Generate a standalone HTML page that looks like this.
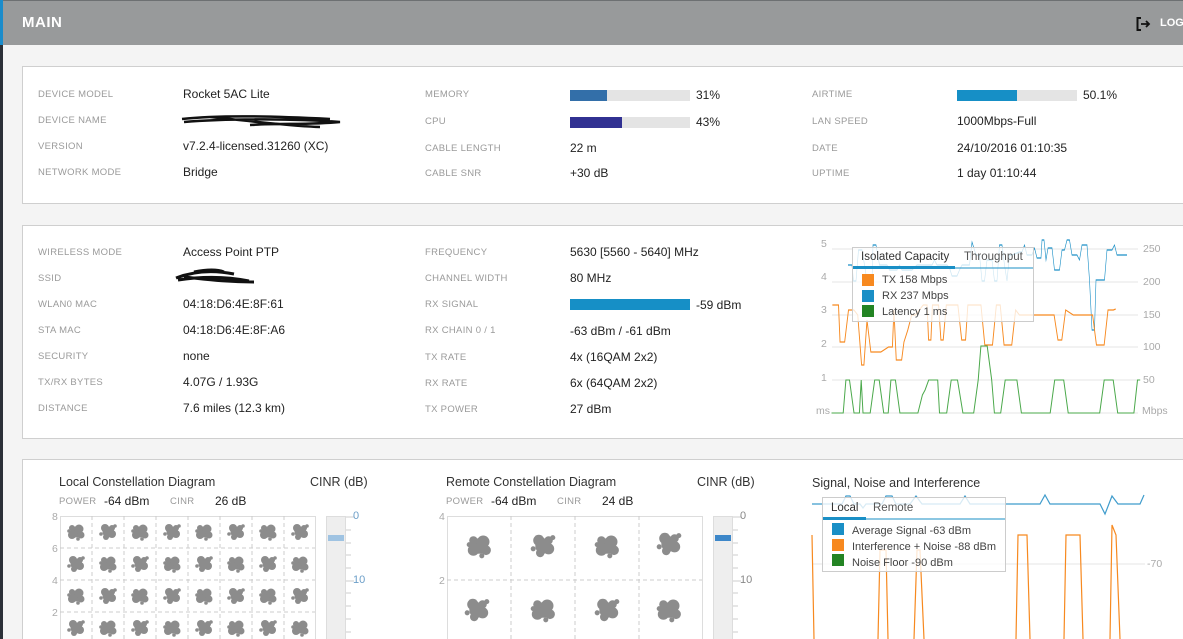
<!DOCTYPE html>
<html><head><meta charset="utf-8">
<style>
*{margin:0;padding:0;box-sizing:border-box}
html,body{overflow:hidden}
body{width:1183px;height:639px;background:#f4f4f4;font-family:"Liberation Sans",sans-serif;position:relative}
.abs{position:absolute;white-space:nowrap}
#hdr{position:absolute;left:0;top:0;width:1183px;height:45px;background:#989a9b;border-top:1px solid #6d7072}
#strip{position:absolute;left:0;top:0;width:3px;height:639px;background:#2b3038}
#strip2{position:absolute;left:0;top:0;width:3px;height:45px;background:#1b8ccb}
.card{position:absolute;left:22px;width:1170px;background:#fff;border:1px solid #cfcfcf}
.l{position:absolute;font-size:9.5px;color:#9a9a9a;white-space:nowrap;letter-spacing:.3px}
.v{position:absolute;font-size:12px;color:#222;white-space:nowrap}
.bar{position:absolute;height:11px;background:#e4e4e4}
.bar i{display:block;height:11px}
.t{position:absolute;font-size:12px;color:#333;white-space:nowrap}
.ax{position:absolute;font-size:10.5px;color:#aaa;white-space:nowrap}
</style></head><body>
<div id="hdr"></div>
<div id="strip"></div><div id="strip2"></div>
<div class="abs" style="left:22px;top:14px;font-size:15px;font-weight:bold;color:#fff;letter-spacing:.5px">MAIN</div>
<svg class="abs" style="left:1136px;top:17px" width="16" height="14" viewBox="0 0 16 14"><path d="M5 1H1.5V13H5" fill="none" stroke="#111" stroke-width="2"/><path d="M5 7H13M10 4L13 7L10 10" fill="none" stroke="#111" stroke-width="1.8"/></svg>
<div class="abs" style="left:1160px;top:17px;font-size:11px;font-weight:bold;color:#fff">LOG</div>

<div class="card" style="top:66px;height:138px"></div>
<div class="l" style="left:38px;top:89px">DEVICE MODEL</div><div class="v" style="left:183px;top:87px">Rocket 5AC Lite</div>
<div class="l" style="left:38px;top:115px">DEVICE NAME</div>
<svg class="abs" style="left:180px;top:113px" width="165" height="22"><path d="M2 6C40 2 90 3 150 6M4 9C50 5 120 6 160 9C130 12 100 10 70 12M30 4C70 8 110 13 140 14" fill="none" stroke="#111" stroke-width="2.5"/></svg>
<div class="l" style="left:38px;top:141px">VERSION</div><div class="v" style="left:183px;top:139px">v7.2.4-licensed.31260 (XC)</div>
<div class="l" style="left:38px;top:167px">NETWORK MODE</div><div class="v" style="left:183px;top:165px">Bridge</div>

<div class="l" style="left:425px;top:89px">MEMORY</div><div class="bar" style="left:570px;top:90px;width:120px"><i style="width:37px;background:#336fa9"></i></div><div class="v" style="left:696px;top:88px">31%</div>
<div class="l" style="left:425px;top:116px">CPU</div><div class="bar" style="left:570px;top:117px;width:120px"><i style="width:52px;background:#313192"></i></div><div class="v" style="left:696px;top:115px">43%</div>
<div class="l" style="left:425px;top:143px">CABLE LENGTH</div><div class="v" style="left:570px;top:141px">22 m</div>
<div class="l" style="left:425px;top:168px">CABLE SNR</div><div class="v" style="left:570px;top:166px">+30 dB</div>

<div class="l" style="left:812px;top:89px">AIRTIME</div><div class="bar" style="left:957px;top:90px;width:120px"><i style="width:60px;background:#168fc6"></i></div><div class="v" style="left:1083px;top:88px">50.1%</div>
<div class="l" style="left:812px;top:116px">LAN SPEED</div><div class="v" style="left:957px;top:114px">1000Mbps-Full</div>
<div class="l" style="left:812px;top:143px">DATE</div><div class="v" style="left:957px;top:141px">24/10/2016 01:10:35</div>
<div class="l" style="left:812px;top:168px">UPTIME</div><div class="v" style="left:957px;top:166px">1 day 01:10:44</div>

<div class="card" style="top:225px;height:214px"></div>
<div class="l" style="left:38px;top:247px">WIRELESS MODE</div><div class="v" style="left:183px;top:245px">Access Point PTP</div>
<div class="l" style="left:38px;top:273px">SSID</div>
<svg class="abs" style="left:174px;top:266px" width="85" height="22"><path d="M2 12C20 5 40 4 60 8M4 14C30 10 55 11 75 15M20 6C35 3 45 4 50 6M10 11C30 13 50 16 80 16" fill="none" stroke="#111" stroke-width="3"/></svg>
<div class="l" style="left:38px;top:299px">WLAN0 MAC</div><div class="v" style="left:183px;top:297px">04:18:D6:4E:8F:61</div>
<div class="l" style="left:38px;top:325px">STA MAC</div><div class="v" style="left:183px;top:323px">04:18:D6:4E:8F:A6</div>
<div class="l" style="left:38px;top:351px">SECURITY</div><div class="v" style="left:183px;top:349px">none</div>
<div class="l" style="left:38px;top:377px">TX/RX BYTES</div><div class="v" style="left:183px;top:375px">4.07G / 1.93G</div>
<div class="l" style="left:38px;top:403px">DISTANCE</div><div class="v" style="left:183px;top:401px">7.6 miles (12.3 km)</div>

<div class="l" style="left:425px;top:247px">FREQUENCY</div><div class="v" style="left:570px;top:245px">5630 [5560 - 5640] MHz</div>
<div class="l" style="left:425px;top:273px">CHANNEL WIDTH</div><div class="v" style="left:570px;top:271px">80 MHz</div>
<div class="l" style="left:425px;top:299px">RX SIGNAL</div><div class="bar" style="left:570px;top:299px;width:120px"><i style="width:120px;background:#168fc6"></i></div><div class="v" style="left:696px;top:298px">-59 dBm</div>
<div class="l" style="left:425px;top:325px">RX CHAIN 0 / 1</div><div class="v" style="left:570px;top:324px">-63 dBm / -61 dBm</div>
<div class="l" style="left:425px;top:352px">TX RATE</div><div class="v" style="left:570px;top:350px">4x (16QAM 2x2)</div>
<div class="l" style="left:425px;top:378px">RX RATE</div><div class="v" style="left:570px;top:376px">6x (64QAM 2x2)</div>
<div class="l" style="left:425px;top:404px">TX POWER</div><div class="v" style="left:570px;top:402px">27 dBm</div>

<!-- chart 1 -->
<svg class="abs" style="left:800px;top:230px" width="383" height="200">
<g stroke="#e6e6e6" stroke-width="1"><line x1="32" y1="19" x2="338" y2="19"/><line x1="32" y1="52" x2="338" y2="52"/><line x1="32" y1="85" x2="338" y2="85"/><line x1="32" y1="117" x2="338" y2="117"/><line x1="32" y1="150" x2="338" y2="150"/><line x1="32" y1="183" x2="338" y2="183"/></g>
<polyline fill="none" stroke="#1a8fc6" stroke-width="1.2" points="32,35 40,35 43,51 48,51 53,20 60,20 65,35 70,51 80,51 82,15 88,15 95,35 110,35 115,40 130,40 135,35 140,40 160,40 170,35 180,35 200,35 205,30 210,35 230,35 235,38 240,46 250,46 255,40 260,35 275,35 280,12 288,25 295,25 300,51 305,51 310,30 320,30 325,51 330,51 335,15 340,15 345,35 350,51 355,25 360,25 375,22 380,22 385,15 390,25 400,25 405,18 410,28 418,28 420,10 424,10 428,30 432,18 440,18 445,40 455,40 460,20 465,20 470,10 475,10 480,25 490,25 495,30 500,15 510,15 515,50 520,100 525,100 528,50 540,50 545,50 550,20 560,20 565,15 570,25 590,25" transform="scale(0.5,1) translate(64,0)"/>
<polyline fill="none" stroke="#f7891f" stroke-width="1.2" points="32,75 40,75 42,112 48,112 53,80 60,80 65,85 70,135 73,135 77,90 82,122 95,122 105,117 110,117 112,80 115,130 122,130 125,112 130,100 135,85 140,85 150,75 155,75 157,110 160,110 162,75 170,75 173,110 176,110 180,75 195,75 200,110 205,110 208,75 225,75 230,115 240,115 245,75 250,75 255,115 265,115 270,80 275,85 320,85 325,110 330,110 335,80 345,85 370,85 375,115 385,115 390,80 397,80 400,79" transform="scale(0.77,1) translate(10,0)"/>
<polyline fill="none" stroke="#4aa84a" stroke-width="1.1" points="32,183 45,183 48,150 52,150 57,183 63,183 65,150 67,183 75,183 80,150 85,150 90,183 95,183 98,150 103,150 108,183 128,183 133,165 136,160 140,150 150,150 152,183 160,183 165,150 172,150 178,183 190,183 195,150 198,116 205,116 210,150 213,183 220,183 225,150 238,150 243,183 275,183 280,150 290,150 295,183 330,183 335,150 345,150 350,183 368,183 372,150 375,150" transform="scale(0.9,1) translate(3,0)"/>
<rect x="52.5" y="17.5" width="181" height="74" fill="#fff" fill-opacity="0.78" stroke="#ccc"/>
<line x1="53" y1="38" x2="233" y2="38" stroke="#1a8fc6" stroke-width="1"/>
<rect x="53" y="36" width="102" height="3" fill="#1a8fc6"/>
<rect x="62" y="44" width="12" height="12" fill="#f7891f"/><rect x="62" y="60" width="12" height="12" fill="#1a8fc6"/><rect x="62" y="75" width="12" height="12" fill="#238423"/>
</svg>
<div class="t" style="left:861px;top:251px;font-size:11.5px">Isolated Capacity</div>
<div class="t" style="left:964px;top:251px;font-size:11.5px;color:#555">Throughput</div>
<div class="t" style="left:882px;top:274px;font-size:11px;color:#444">TX 158 Mbps</div>
<div class="t" style="left:882px;top:290px;font-size:11px;color:#444">RX 237 Mbps</div>
<div class="t" style="left:882px;top:306px;font-size:11px;color:#444">Latency 1 ms</div>
<div class="ax" style="left:821px;top:238px">5</div><div class="ax" style="left:821px;top:271px">4</div><div class="ax" style="left:821px;top:304px">3</div><div class="ax" style="left:821px;top:338px">2</div><div class="ax" style="left:821px;top:372px">1</div><div class="ax" style="left:816px;top:405px">ms</div>
<div class="ax" style="left:1143px;top:243px">250</div><div class="ax" style="left:1143px;top:276px">200</div><div class="ax" style="left:1143px;top:309px">150</div><div class="ax" style="left:1143px;top:341px">100</div><div class="ax" style="left:1143px;top:374px">50</div><div class="ax" style="left:1142px;top:405px">Mbps</div>

<div class="card" style="top:459px;height:190px"></div>
<svg width="0" height="0" style="position:absolute"><defs>
<g id="b1" fill="#8c8c8c"><circle cx="0" cy="0" r="5.5"/><circle cx="3" cy="-3" r="4.5"/><circle cx="-4" cy="3" r="4"/><circle cx="5" cy="3" r="3.5"/><circle cx="-4" cy="-4" r="3"/><circle cx="-7" cy="-1" r="1.8"/><circle cx="2" cy="7" r="1.8"/></g>
<g id="b2" fill="#8c8c8c"><circle cx="0" cy="0" r="5.5"/><circle cx="-3" cy="-4" r="4"/><circle cx="4" cy="2" r="4"/><circle cx="-2" cy="5" r="3"/><circle cx="4" cy="-4" r="3"/><circle cx="7" cy="-6" r="1.8"/><circle cx="-7" cy="2" r="1.8"/></g>
</defs></svg>
<div class="t" style="left:59px;top:475px;font-size:12.5px">Local Constellation Diagram</div>
<div class="t" style="left:310px;top:475px;font-size:12.5px">CINR (dB)</div>
<div class="l" style="left:59px;top:496px">POWER</div><div class="v" style="left:104px;top:494px">-64 dBm</div>
<div class="l" style="left:170px;top:496px">CINR</div><div class="v" style="left:215px;top:494px">26 dB</div>
<div class="ax" style="left:52px;top:511px">8</div><div class="ax" style="left:52px;top:543px">6</div><div class="ax" style="left:52px;top:575px">4</div><div class="ax" style="left:52px;top:607px">2</div>
<svg class="abs" style="left:60px;top:516px" width="300" height="123">
<rect x="0.5" y="0.5" width="255" height="130" fill="none" stroke="#ddd"/>
<g stroke="#ccc" stroke-dasharray="4,3"><line x1="32" y1="0" x2="32" y2="123"/><line x1="64" y1="0" x2="64" y2="123"/><line x1="96" y1="0" x2="96" y2="123"/><line x1="128" y1="0" x2="128" y2="123"/><line x1="160" y1="0" x2="160" y2="123"/><line x1="192" y1="0" x2="192" y2="123"/><line x1="224" y1="0" x2="224" y2="123"/><line x1="0" y1="32" x2="255" y2="32"/><line x1="0" y1="64" x2="255" y2="64"/><line x1="0" y1="96" x2="255" y2="96"/></g>
<g>
<use href="#b1" x="16" y="16"/><use href="#b2" x="48" y="16"/><use href="#b1" x="80" y="16"/><use href="#b2" x="112" y="16"/><use href="#b1" x="144" y="16"/><use href="#b2" x="176" y="16"/><use href="#b1" x="208" y="16"/><use href="#b2" x="240" y="16"/>
<use href="#b2" x="16" y="48"/><use href="#b1" x="48" y="48"/><use href="#b2" x="80" y="48"/><use href="#b1" x="112" y="48"/><use href="#b2" x="144" y="48"/><use href="#b1" x="176" y="48"/><use href="#b2" x="208" y="48"/><use href="#b1" x="240" y="48"/>
<use href="#b1" x="16" y="80"/><use href="#b2" x="48" y="80"/><use href="#b1" x="80" y="80"/><use href="#b2" x="112" y="80"/><use href="#b1" x="144" y="80"/><use href="#b2" x="176" y="80"/><use href="#b1" x="208" y="80"/><use href="#b2" x="240" y="80"/>
<use href="#b2" x="16" y="112"/><use href="#b1" x="48" y="112"/><use href="#b2" x="80" y="112"/><use href="#b1" x="112" y="112"/><use href="#b2" x="144" y="112"/><use href="#b1" x="176" y="112"/><use href="#b2" x="208" y="112"/><use href="#b1" x="240" y="112"/>
</g>
<rect x="266.5" y="0.5" width="19" height="130" fill="#eee" stroke="#ddd"/>
<rect x="268" y="19" width="16" height="6" fill="#9fc3e2"/>
<g stroke="#ccc"><line x1="286" y1="1" x2="294" y2="1"/><line x1="286" y1="14" x2="291" y2="14"/><line x1="286" y1="27" x2="291" y2="27"/><line x1="286" y1="39" x2="291" y2="39"/><line x1="286" y1="52" x2="291" y2="52"/><line x1="286" y1="65" x2="294" y2="65"/><line x1="286" y1="77" x2="291" y2="77"/><line x1="286" y1="90" x2="291" y2="90"/><line x1="286" y1="103" x2="291" y2="103"/><line x1="286" y1="116" x2="291" y2="116"/></g>
</svg>
<div class="ax" style="left:353px;top:510px;color:#6b9ec8;font-size:11px">0</div><div class="ax" style="left:353px;top:574px;color:#6b9ec8;font-size:11px">10</div>

<div class="t" style="left:446px;top:475px;font-size:12.5px">Remote Constellation Diagram</div>
<div class="t" style="left:697px;top:475px;font-size:12.5px">CINR (dB)</div>
<div class="l" style="left:446px;top:496px">POWER</div><div class="v" style="left:491px;top:494px">-64 dBm</div>
<div class="l" style="left:557px;top:496px">CINR</div><div class="v" style="left:602px;top:494px">24 dB</div>
<div class="ax" style="left:439px;top:511px">4</div><div class="ax" style="left:439px;top:575px">2</div>
<svg class="abs" style="left:447px;top:516px" width="300" height="123">
<rect x="0.5" y="0.5" width="255" height="130" fill="none" stroke="#ddd"/>
<g stroke="#ccc" stroke-dasharray="4,3"><line x1="64" y1="0" x2="64" y2="123"/><line x1="128" y1="0" x2="128" y2="123"/><line x1="192" y1="0" x2="192" y2="123"/><line x1="0" y1="64" x2="255" y2="64"/></g>
<g transform="translate(32,30) scale(1.4)"><use href="#b1"/></g><g transform="translate(96,30) scale(1.4)"><use href="#b2"/></g><g transform="translate(160,30) scale(1.4)"><use href="#b1"/></g><g transform="translate(222,28) scale(1.4)"><use href="#b2"/></g>
<g transform="translate(30,94) scale(1.4)"><use href="#b2"/></g><g transform="translate(96,94) scale(1.4)"><use href="#b1"/></g><g transform="translate(160,94) scale(1.4)"><use href="#b2"/></g><g transform="translate(222,94) scale(1.4)"><use href="#b1"/></g>
<rect x="266.5" y="0.5" width="19" height="130" fill="#eee" stroke="#ddd"/>
<rect x="268" y="19" width="16" height="6" fill="#3d87c9"/>
<g stroke="#ccc"><line x1="286" y1="1" x2="294" y2="1"/><line x1="286" y1="14" x2="291" y2="14"/><line x1="286" y1="27" x2="291" y2="27"/><line x1="286" y1="39" x2="291" y2="39"/><line x1="286" y1="52" x2="291" y2="52"/><line x1="286" y1="65" x2="294" y2="65"/><line x1="286" y1="77" x2="291" y2="77"/><line x1="286" y1="90" x2="291" y2="90"/><line x1="286" y1="103" x2="291" y2="103"/><line x1="286" y1="116" x2="291" y2="116"/></g>
</svg>
<div class="ax" style="left:740px;top:510px;color:#888;font-size:11px">0</div><div class="ax" style="left:740px;top:574px;color:#888;font-size:11px">10</div>

<div class="t" style="left:812px;top:476px;font-size:12.5px">Signal, Noise and Interference</div>
<svg class="abs" style="left:800px;top:490px" width="383" height="149">
<line x1="12" y1="74" x2="345" y2="74" stroke="#e6e6e6"/>
<polyline fill="none" stroke="#3f9ccc" stroke-width="1.2" points="12,14 42,14 46,6 50,6 54,14 60,14 63,18 66,14 82,14 86,6 92,6 96,14 110,14 116,6 122,14 160,14 165,6 170,14 240,14 245,5 250,14 300,14 305,24 312,6 318,14 340,14 344,5"/>
<path fill="none" stroke="#f7891f" stroke-width="1.2" d="M12,45L14,149M78,149L80,60L86,60L88,149M114,149L117,60L120,60L124,149M216,149L218,45L227,45L230,149M264,149L266,45L280,45L283,149M310,149L312,35L316,45L320,149"/>
<rect x="22.5" y="7.5" width="183" height="74" fill="#fff" fill-opacity="0.8" stroke="#ccc"/>
<line x1="23" y1="29" x2="205" y2="29" stroke="#1a8fc6"/>
<rect x="23" y="27" width="43" height="3" fill="#1a8fc6"/>
<rect x="32" y="33" width="12" height="12" fill="#1a8fc6"/><rect x="32" y="49" width="12" height="12" fill="#f7891f"/><rect x="32" y="64" width="12" height="12" fill="#238423"/>
</svg>
<div class="t" style="left:831px;top:502px;font-size:11.5px">Local</div>
<div class="t" style="left:873px;top:502px;font-size:11.5px;color:#555">Remote</div>
<div class="t" style="left:852px;top:525px;font-size:11px;color:#444">Average Signal -63 dBm</div>
<div class="t" style="left:852px;top:541px;font-size:11px;color:#444">Interference + Noise -88 dBm</div>
<div class="t" style="left:852px;top:557px;font-size:11px;color:#444">Noise Floor -90 dBm</div>
<div class="ax" style="left:1147px;top:558px">-70</div>
</body></html>
